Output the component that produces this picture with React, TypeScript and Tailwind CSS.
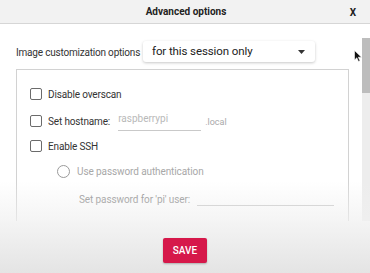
import React from "react";

function Checkbox() {
  return <div className="w-[12px] h-[12px] border-[1.5px] border-[#6b6b6b] rounded-[2px] shrink-0" />;
}

export default function App() {
  return (
    <div
      className="w-[370px] h-[273px] overflow-hidden bg-white flex flex-col relative"
      style={{ fontFamily: "Roboto, 'Liberation Sans', sans-serif" }}
    >
      {/* header */}
      <div className="h-[24px] shrink-0 bg-[#f2f2f2] border-b border-[#d6d6d6] flex items-center relative">
        <div className="flex-1 text-center text-[10px] font-bold text-[#222] pl-[2px]">Advanced options</div>
        <div className="absolute right-[14px] top-[5px] text-[10px] font-bold text-[#222]">X</div>
      </div>

      {/* body */}
      <div className="flex h-[197px] shrink-0 relative">
        <div className="flex-1 flex flex-col pl-4 pr-[13px]">
          <div className="mt-[17px] h-[21px] flex items-center">
            <div className="w-[127px] shrink-0 whitespace-nowrap text-[10px] tracking-[-0.2px] text-[#333] pt-[1px]">Image customization options</div>
            <div className="w-[172px] h-[21px] rounded-[3px] bg-white shadow-[0_1px_3px_rgba(0,0,0,0.22)] flex items-center pl-[9px] pr-[10px]">
              <span className="flex-1 text-[11.5px] tracking-[-0.1px] text-[#222]">for this session only</span>
              <svg width="7" height="4" viewBox="0 0 7 4">
                <path d="M0 0 L7 0 L3.5 4 Z" fill="#333" />
              </svg>
            </div>
          </div>

          <div className="mt-[7px] flex-1 border border-b-0 border-[#d2d2d2] pl-[13px] pt-[14px] flex flex-col">
            <div className="h-[20px] flex items-center gap-[6px]">
              <Checkbox />
              <span className="text-[10px] tracking-[-0.15px] text-[#333]">Disable overscan</span>
            </div>
            <div className="mt-[7px] h-[20px] flex items-center">
              <Checkbox />
              <span className="ml-[6px] text-[10px] tracking-[-0.15px] text-[#333]">Set hostname:</span>
              <div className="ml-[8px] w-[83px] h-[20px] border-b border-[#c9c9c9] flex items-center pb-[4px]">
                <span className="text-[10px] text-[#b9b9b9]">raspberrypi</span>
              </div>
              <span className="ml-[4px] text-[9px] text-[#a9a9a9] pt-[3px]">.local</span>
            </div>
            <div className="mt-[5px] h-[20px] flex items-center gap-[6px]">
              <Checkbox />
              <span className="text-[10px] tracking-[-0.15px] text-[#333]">Enable SSH</span>
            </div>
            <div className="mt-[5px] h-[20px] flex items-center pl-[27px] gap-[7px]">
              <div className="w-[13px] h-[13px] rounded-full border-[1.5px] border-[#9a9a9a]" />
              <span className="text-[10px] tracking-[-0.1px] text-[#a8a8a8]">Use password authentication</span>
            </div>
            <div className="mt-[10px] h-[20px] flex items-end pl-[49px]">
              <span className="text-[10px] tracking-[-0.1px] text-[#8a8a8a] pb-[4px]">Set password for 'pi' user:</span>
              <div className="ml-[7px] w-[137px] border-b border-[#c4c4c4] mb-[5px]" />
            </div>
          </div>
        </div>

        {/* scrollbar */}
        <div className="w-[8px] pt-[14px] flex flex-col">
          <div className="flex-1 bg-[#ededed] flex flex-col">
            <div className="h-[55px] bg-[#bdbdbd]" />
          </div>
        </div>

        {/* fade overlay */}
        <div className="absolute left-0 right-0 bottom-0 h-[40px] bg-gradient-to-b from-[rgba(255,255,255,0)] to-[rgba(240,240,240,0.7)] pointer-events-none" />

        {/* cursor */}
        <svg className="absolute left-[354px] top-[26px]" width="8" height="12" viewBox="0 0 8 12">
          <path d="M0.5 0.5 L0.5 10 L2.8 7.8 L4.5 11.5 L6 10.8 L4.3 7.2 L7.5 7.2 Z" fill="#111" stroke="#fff" strokeWidth="0.6" />
        </svg>
      </div>

      {/* footer */}
      <div className="flex-1 bg-gradient-to-b from-[#f4f4f4] to-[#e4e4e4] flex justify-center pt-[17px]">
        <div className="w-[44px] h-[25px] bg-[#d6184a] rounded-[2px] shadow-[0_1px_2px_rgba(0,0,0,0.25)] flex items-center justify-center">
          <span className="text-[10px] font-medium text-white">SAVE</span>
        </div>
      </div>
    </div>
  );
}
